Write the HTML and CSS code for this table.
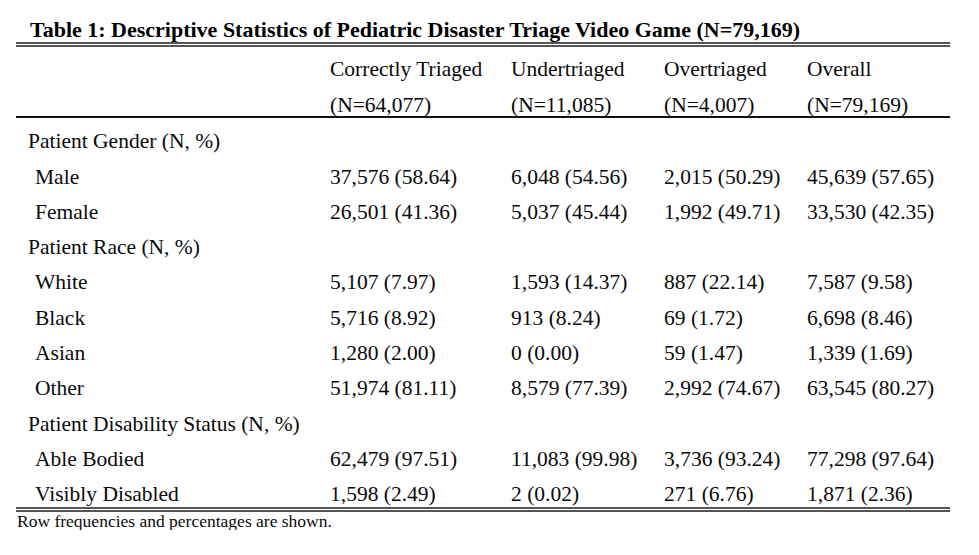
FILE: index.html
```html
<!DOCTYPE html>
<html lang="en">
<head>
<meta charset="utf-8">
<title>Table 1</title>
<link rel="stylesheet" href="styles.css">
</head>
<body>
<div class="page">
  <div class="title">Table 1: Descriptive Statistics of Pediatric Disaster Triage Video Game (N=79,169)</div>
  <div class="thead">
    <div class="row hrow1">
      <div class="label"></div>
      <div>Correctly Triaged</div>
      <div>Undertriaged</div>
      <div>Overtriaged</div>
      <div>Overall</div>
    </div>
    <div class="row hrow2">
      <div class="label"></div>
      <div>(N=64,077)</div>
      <div>(N=11,085)</div>
      <div>(N=4,007)</div>
      <div>(N=79,169)</div>
    </div>
  </div>
  <div class="tbody">
    <div class="row"><div class="label group">Patient Gender (N, %)</div><div></div><div></div><div></div><div></div></div>
    <div class="row"><div class="label sub">Male</div><div>37,576 (58.64)</div><div>6,048 (54.56)</div><div>2,015 (50.29)</div><div>45,639 (57.65)</div></div>
    <div class="row"><div class="label sub">Female</div><div>26,501 (41.36)</div><div>5,037 (45.44)</div><div>1,992 (49.71)</div><div>33,530 (42.35)</div></div>
    <div class="row"><div class="label group">Patient Race (N, %)</div><div></div><div></div><div></div><div></div></div>
    <div class="row"><div class="label sub">White</div><div>5,107 (7.97)</div><div>1,593 (14.37)</div><div>887 (22.14)</div><div>7,587 (9.58)</div></div>
    <div class="row"><div class="label sub">Black</div><div>5,716 (8.92)</div><div>913 (8.24)</div><div>69 (1.72)</div><div>6,698 (8.46)</div></div>
    <div class="row"><div class="label sub">Asian</div><div>1,280 (2.00)</div><div>0 (0.00)</div><div>59 (1.47)</div><div>1,339 (1.69)</div></div>
    <div class="row"><div class="label sub">Other</div><div>51,974 (81.11)</div><div>8,579 (77.39)</div><div>2,992 (74.67)</div><div>63,545 (80.27)</div></div>
    <div class="row"><div class="label group">Patient Disability Status (N, %)</div><div></div><div></div><div></div><div></div></div>
    <div class="row"><div class="label sub">Able Bodied</div><div>62,479 (97.51)</div><div>11,083 (99.98)</div><div>3,736 (93.24)</div><div>77,298 (97.64)</div></div>
    <div class="row last"><div class="label sub">Visibly Disabled</div><div>1,598 (2.49)</div><div>2 (0.02)</div><div>271 (6.76)</div><div>1,871 (2.36)</div></div>
  </div>
  <div class="note">Row frequencies and percentages are shown.</div>
</div>
</body>
</html>
```
FILE: styles.css
```css
html, body {
  margin: 0;
  padding: 0;
  background: #ffffff;
}
body {
  font-family: "Liberation Serif", "Times New Roman", serif;
  color: #0a0a0a;
}
.page {
  width: 934px;
  margin-left: 16px;
}
.title {
  padding-top: 18px;
  padding-left: 14px;
  height: 24px;
  line-height: 24px;
  font-size: 22px;
  font-weight: bold;
  color: #000;
  border-bottom: 5px double #555555;
  white-space: nowrap;
}
.row {
  display: grid;
  grid-template-columns: 314px 181px 153px 143px 143px;
  height: 35.3px;
  line-height: 35.3px;
  font-size: 21.5px;
  white-space: nowrap;
}
.thead {
  padding-top: 5px;
  border-bottom: 2px solid #111111;
}
.hrow1 {
  height: 35.5px;
  line-height: 35.5px;
}
.hrow2 {
  height: 28.5px;
  line-height: 35.5px;
}
.tbody {
  padding-top: 6.3px;
  border-bottom: 5px double #555555;
}
.row.last {
  height: 29.7px;
}
.label.group {
  padding-left: 12px;
}
.label.sub {
  padding-left: 19px;
}
.note {
  padding-left: 1px;
  font-size: 17.5px;
  line-height: 18px;
}
```
